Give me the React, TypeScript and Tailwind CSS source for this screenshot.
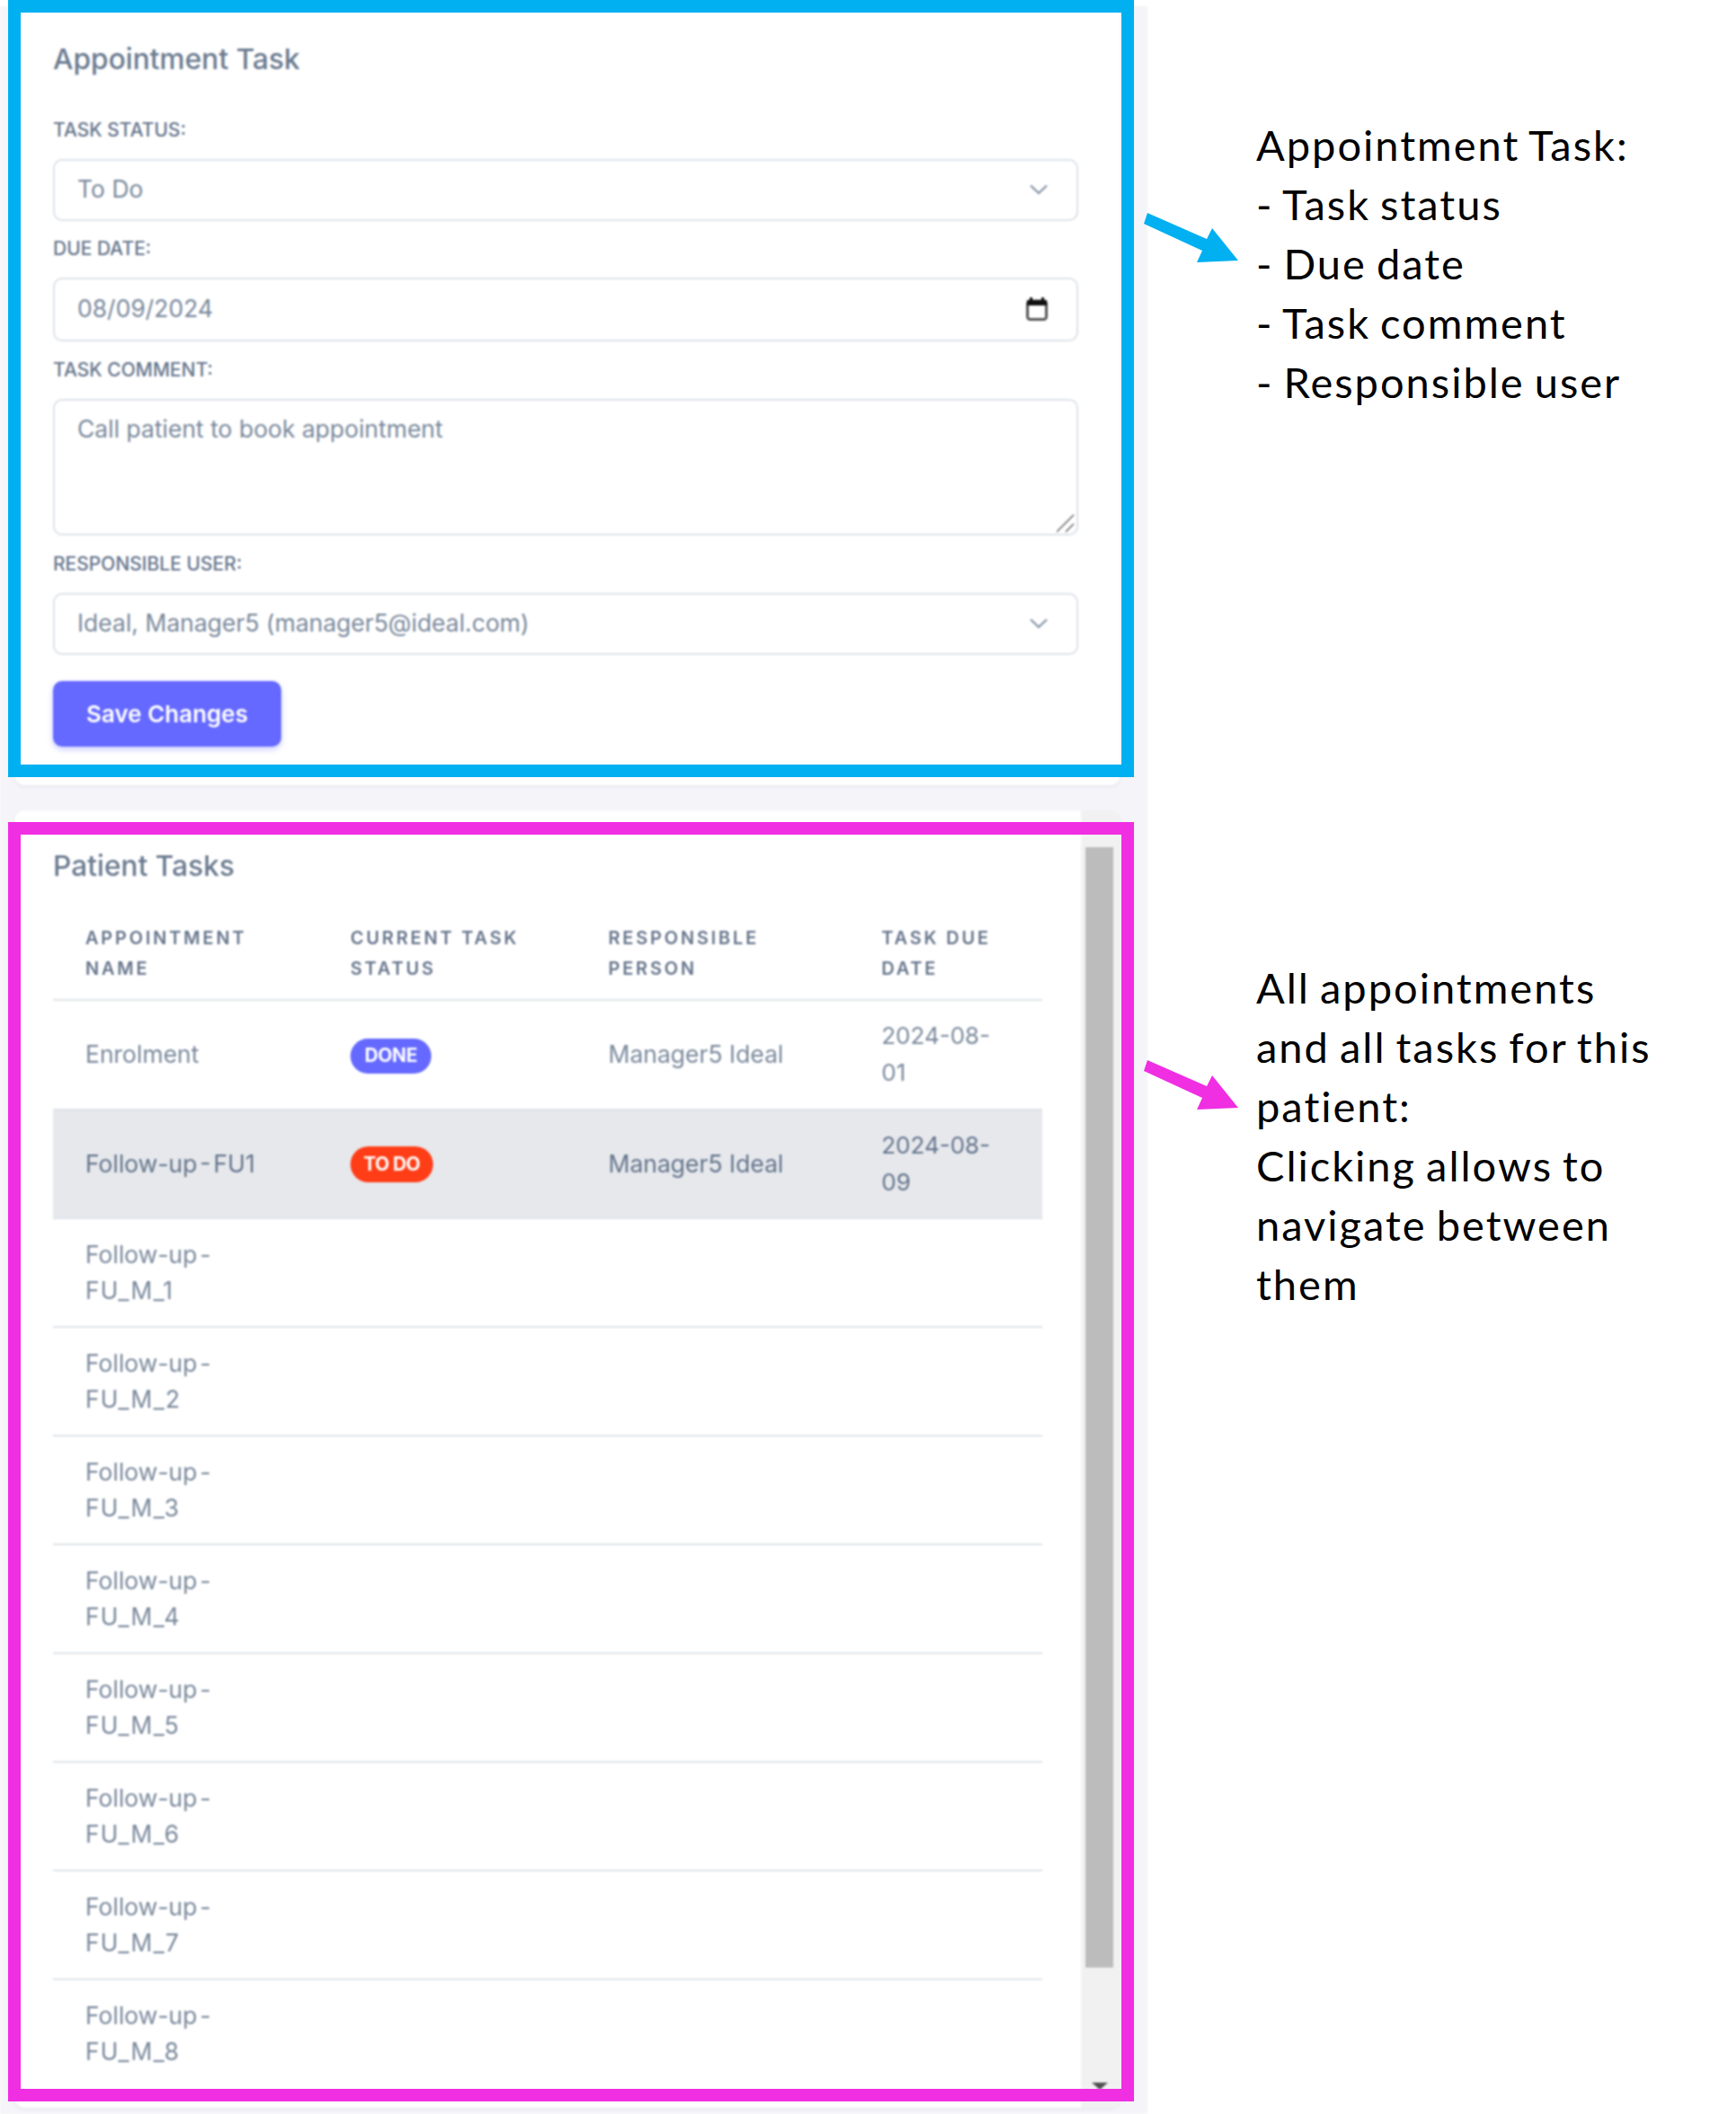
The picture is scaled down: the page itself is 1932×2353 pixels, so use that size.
const FONT = "font-['Inter','Liberation_Sans',sans-serif]";

function Chevron() {
  return (
    <svg width="20" height="12" viewBox="0 0 20 12" fill="none" stroke="#8593a6" strokeWidth="2.2">
      <path d="M1 1.5 L10 10 L19 1.5" />
    </svg>
  );
}

function Calendar() {
  return (
    <svg width="24" height="26" viewBox="0 0 24 26">
      <rect x="1.5" y="4" width="21" height="20.5" rx="3" fill="none" stroke="#555" strokeWidth="3" />
      <rect x="1" y="3" width="22" height="6" fill="#111" />
      <rect x="4" y="0" width="3" height="4" fill="#111" />
      <rect x="17" y="0" width="3" height="4" fill="#111" />
    </svg>
  );
}

function Label({ children }: { children: string }) {
  return <div className="h-[30px] pt-[1px] leading-[30px] text-[21px] font-medium text-[#66758c] mb-[18px]">{children}</div>;
}

function Box({ children, h }: { children: React.ReactNode; h: string }) {
  return (
    <div className={`${h} w-[1141px] rounded-[10px] border-2 border-[#dde2e8] bg-white pl-[25px] pr-[32px] flex items-center justify-between text-[26.5px] text-[#7a899c]`}>
      {children}
    </div>
  );
}

const rows = ["FU_M_1", "FU_M_2", "FU_M_3", "FU_M_4", "FU_M_5", "FU_M_6", "FU_M_7", "FU_M_8"];

function Th({ a, b }: { a: string; b: string }) {
  return (
    <th className="pl-[36px] text-left align-middle text-[20px] leading-[34px] font-semibold tracking-[2.8px] text-[#66758c]">
      {a}
      <br />
      {b}
    </th>
  );
}

function Td({ children, dark }: { children?: React.ReactNode; dark?: boolean }) {
  return (
    <td className={`pl-[36px] pb-[2px] align-middle text-[26.5px] leading-[40px] ${dark ? "text-[#64748b]" : "text-[#7a899c]"}`}>
      {children}
    </td>
  );
}

export default function App() {
  return (
    <div className={`relative w-[1932px] h-[2353px] bg-white flex ${FONT}`}>
      <div className="w-[1277px] mt-[7px] bg-[#f4f4f9] pl-[16px] flex flex-col gap-[28px] blur-[0.8px]">
        <section className="w-[1231px] rounded-[12px] bg-white pl-[43px] pt-[40px] pb-[43px] shadow-[0_2px_4px_rgba(30,40,80,0.06)]">
          <h2 className="h-[38px] leading-[38px] text-[31.7px] font-medium text-[#6b7b90] mb-[44px]">Appointment Task</h2>
          <Label>TASK STATUS:</Label>
          <Box h="h-[69px] pb-[2px]">
            <span>To Do</span>
            <Chevron />
          </Box>
          <div className="mt-[15px]"><Label>DUE DATE:</Label></div>
          <Box h="h-[71px] pb-[2px]">
            <span>08/09/2024</span>
            <Calendar />
          </Box>
          <div className="mt-[16px]"><Label>TASK COMMENT:</Label></div>
          <div className="relative">
            <Box h="h-[152px] !items-start pt-[12px]">
              <span>Call patient to book appointment</span>
            </Box>
            <svg className="absolute left-[1117px] top-[128px]" width="20" height="21" viewBox="0 0 20 21" stroke="#666" strokeWidth="1.5">
              <path d="M0 20 L19 1 M10 20 L19 11" />
            </svg>
          </div>
          <div className="mt-[16px]"><Label>RESPONSIBLE USER:</Label></div>
          <Box h="h-[69px] pb-[2px]">
            <span>Ideal, Manager5 (manager5@ideal.com)</span>
            <Chevron />
          </Box>
          <button className="mt-[29px] h-[73px] w-[254px] rounded-[10px] bg-[#6569ff] text-white text-[26px] font-semibold shadow-[0_3px_6px_rgba(101,105,255,0.35)]">
            Save Changes
          </button>
        </section>

        <section className="w-[1231px] flex-1 mb-[7px] rounded-[12px] bg-white flex overflow-hidden shadow-[0_2px_4px_rgba(30,40,80,0.06)]">
          <div className="w-[1187px] pl-[43px] pt-[43px] overflow-hidden">
            <h2 className="h-[38px] leading-[38px] text-[31.7px] font-medium text-[#6b7b90]">Patient Tasks</h2>
            <table className="mt-[27px] w-[1101px] table-fixed border-collapse">
              <colgroup>
                <col className="w-[295px]" />
                <col className="w-[287px]" />
                <col className="w-[304px]" />
                <col className="w-[215px]" />
              </colgroup>
              <thead>
                <tr className="h-[103px] border-b-2 border-[#dfe3e8]">
                  <Th a="APPOINTMENT" b="NAME" />
                  <Th a="CURRENT TASK" b="STATUS" />
                  <Th a="RESPONSIBLE" b="PERSON" />
                  <Th a="TASK DUE" b="DATE" />
                </tr>
              </thead>
              <tbody>
                <tr className="h-[122px] border-b-2 border-[#dfe3e8]">
                  <Td>Enrolment</Td>
                  <td className="pl-[36px] pt-[2px] align-middle">
                    <span className="inline-flex h-[39px] w-[90px] items-center justify-center rounded-full bg-[#6569ff] text-[21px] font-bold tracking-[-0.4px] text-white">DONE</span>
                  </td>
                  <Td>Manager5 Ideal</Td>
                  <Td><span className="text-[26px]">2024-08-<br />01</span></Td>
                </tr>
                <tr className="h-[121px] border-b-2 border-[#dfe3e8] bg-[#e6e8ec]">
                  <Td dark><span className="[word-spacing:-4.5px]">Follow-up - FU1</span></Td>
                  <td className="pl-[36px] align-middle">
                    <span className="inline-flex h-[40px] w-[92px] items-center justify-center rounded-full bg-[#ff3d17] text-[21px] font-bold tracking-[-0.6px] text-white">TO DO</span>
                  </td>
                  <Td dark>Manager5 Ideal</Td>
                  <Td dark><span className="text-[26px]">2024-08-<br />09</span></Td>
                </tr>
                {rows.map((r, i) => (
                  <tr key={r} className={`h-[121px] ${i < 7 ? "border-b-2 border-[#dfe3e8]" : ""}`}>
                    <Td>
                      <span className="[word-spacing:-4.5px]">Follow-up -</span>
                      <br />
                      <span className="tracking-[1.2px]">{r}</span>
                    </Td>
                    <Td />
                    <Td />
                    <Td />
                  </tr>
                ))}
              </tbody>
            </table>
          </div>
          <div className="relative flex-1 bg-[#f1f1f1] pl-[5px] pt-[41px]">
            <div className="h-[1247px] w-[31px] bg-[#bcbcbc]" />
            <svg className="absolute left-[12px] top-[1416px]" width="18" height="8" viewBox="0 0 18 8">
              <path d="M0 0 H18 L9 8 Z" fill="#505050" />
            </svg>
          </div>
        </section>
      </div>

      <div className="absolute left-[9px] top-0 h-[865px] w-[1253px] border-[14px] border-[#00b0f0]" />
      <div className="absolute left-[9px] top-[915px] h-[1424px] w-[1253px] border-[14px] border-[#f02ee2]" />

      <svg className="absolute left-[1270px] top-[230px]" width="112" height="70" viewBox="0 0 112 70">
        <path d="M7 7 L73 36 L79 24 L108 60 L62 62 L68 49 L3 19 Z" fill="#00b0f0" />
      </svg>
      <svg className="absolute left-[1270px] top-[1173px]" width="112" height="70" viewBox="0 0 112 70">
        <path d="M7 7 L73 36 L79 24 L108 60 L62 62 L68 49 L3 19 Z" fill="#f02ee2" />
      </svg>

      <div className="flex-1 pl-[121px] font-['Lato','Liberation_Sans',sans-serif] text-[47px] leading-[66px] tracking-[2px] [word-spacing:-3px] text-black">
        <div className="mt-[128px]">
          <div>Appointment Task:</div>
          <div>- Task status</div>
          <div>- Due date</div>
          <div>- Task comment</div>
          <div>- Responsible user</div>
        </div>
        <div className="mt-[608px]">
          <div>All appointments</div>
          <div>and all tasks for this</div>
          <div>patient:</div>
          <div>Clicking allows to</div>
          <div>navigate between</div>
          <div>them</div>
        </div>
      </div>
    </div>
  );
}
